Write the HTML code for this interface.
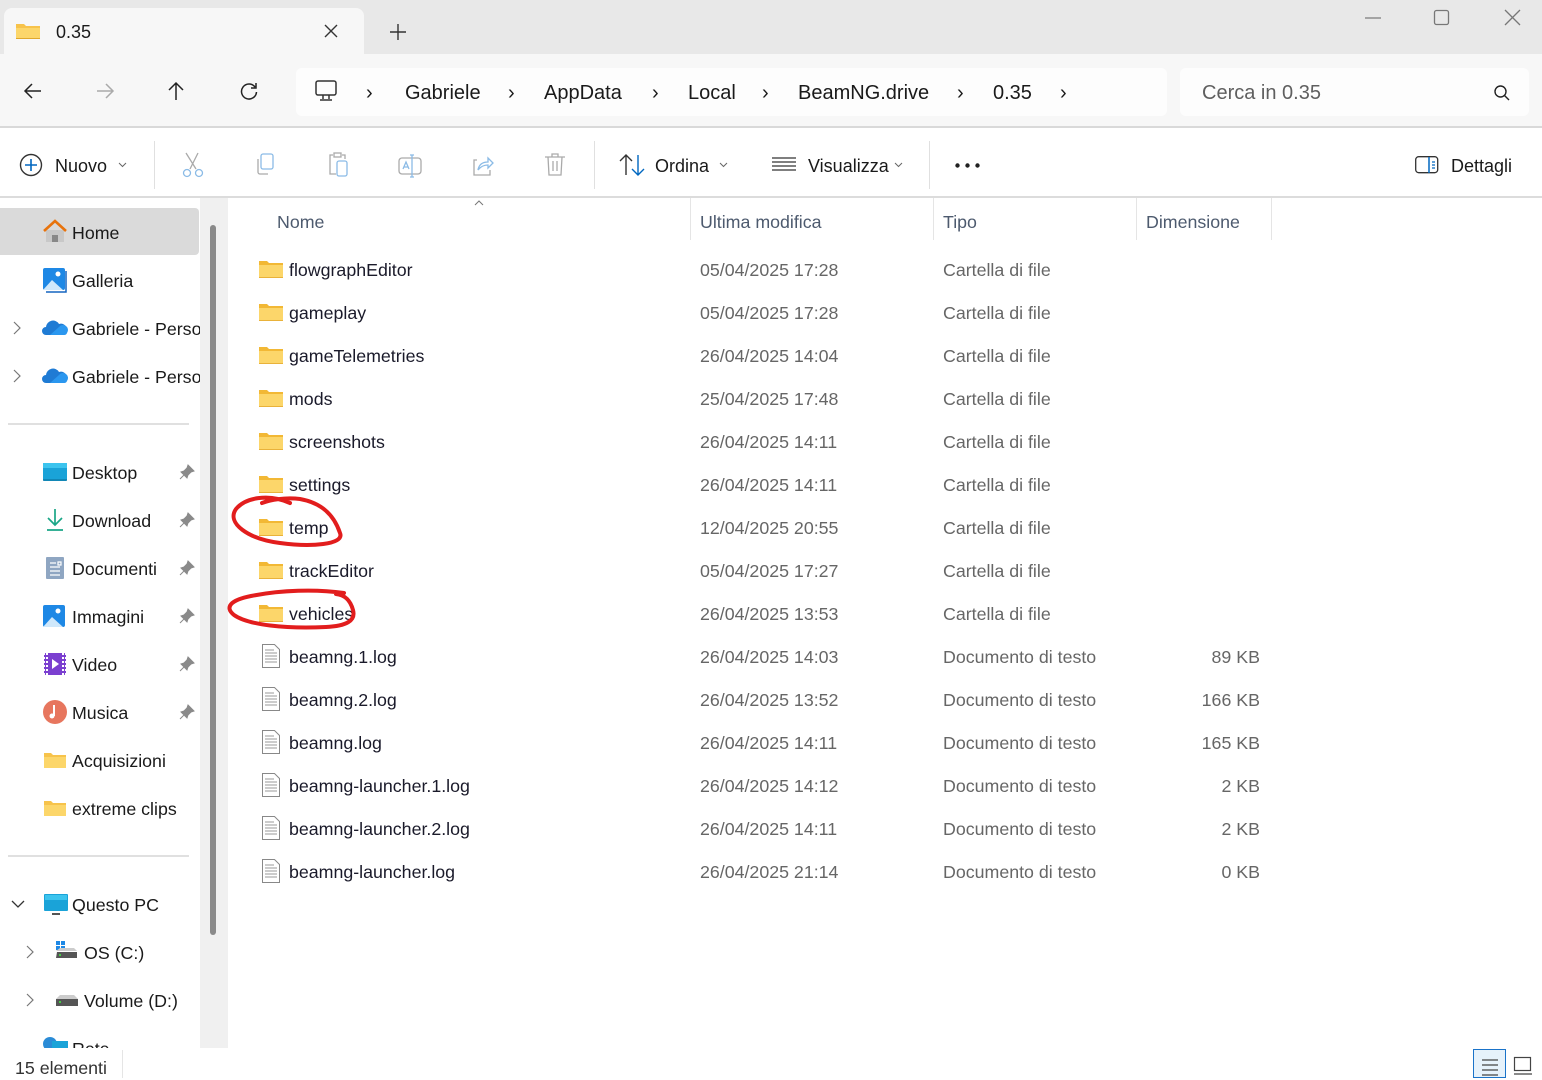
<!DOCTYPE html>
<html><head><meta charset="utf-8"><style>
*{margin:0;padding:0;box-sizing:border-box}
body{width:1542px;height:1078px;position:relative;overflow:hidden;background:#fff;font-family:"Liberation Sans",sans-serif;color:#1a1a1a;font-size:18px}
.a{position:absolute;white-space:nowrap}
.t{line-height:24px}
svg{position:absolute;overflow:visible}
.g{color:#666}
.h{color:#4d5a6e}
.r{font-size:17.8px}
</style></head><body>
<!-- title bar -->
<div class="a" style="left:0;top:0;width:1542px;height:54px;background:#e8e8e8"></div>
<div class="a" style="left:4px;top:8px;width:360px;height:48px;background:#f7f7f7;border-radius:8px 8px 0 0"></div>
<svg style="left:16px;top:22px" width="24" height="18"><path d="M0 2h8l2 2h14v13H0z" fill="#f7c34b"/><path d="M0 6h24v11H0z" fill="#fcd66a"/><path d="M0 16h24v1H0z" fill="#e0a82c"/></svg>
<div class="a t" style="left:56px;top:20px;font-size:18px">0.35</div>
<svg style="left:325px;top:25px" width="12" height="12"><path d="M0 0L12 12M12 0L0 12" stroke="#333" stroke-width="1.4"/></svg>
<svg style="left:390px;top:24px" width="16" height="16"><path d="M8 0V16M0 8H16" stroke="#333" stroke-width="1.4"/></svg>
<svg style="left:1365px;top:17px" width="16" height="2"><path d="M0 1H16" stroke="#777" stroke-width="1.2"/></svg>
<svg style="left:1434px;top:10px" width="16" height="16"><rect x=".5" y=".5" width="14" height="14" rx="2" fill="none" stroke="#777" stroke-width="1.3"/></svg>
<svg style="left:1505px;top:10px" width="16" height="16"><path d="M0 0L15 15M15 0L0 15" stroke="#777" stroke-width="1.3"/></svg>
<!-- address row -->
<div class="a" style="left:0;top:54px;width:1542px;height:74px;background:#f7f7f7;border-bottom:2px solid #d9d9d9"></div>
<svg style="left:24px;top:83px" width="18" height="16"><path d="M17 8H1M8 1L1 8L8 15" fill="none" stroke="#222" stroke-width="1.5"/></svg>
<svg style="left:96px;top:83px" width="18" height="16"><path d="M1 8H17M10 1L17 8L10 15" fill="none" stroke="#aaa" stroke-width="1.5"/></svg>
<svg style="left:168px;top:82px" width="16" height="18"><path d="M8 18V1M1 8L8 1L15 8" fill="none" stroke="#222" stroke-width="1.5"/></svg>
<svg style="left:240px;top:82px" width="18" height="18"><path d="M15 5A7.5 7.5 0 1 0 16.5 10M16 1V6H11" fill="none" stroke="#222" stroke-width="1.5"/></svg>
<div class="a" style="left:296px;top:68px;width:871px;height:48px;background:#fdfdfd;border-radius:6px"></div>
<svg style="left:315px;top:80px" width="22" height="22"><rect x="1" y="1" width="20" height="14" rx="2" fill="none" stroke="#333" stroke-width="1.5"/><path d="M8 15V19M14 15V19M5 20H17" stroke="#333" stroke-width="1.5"/></svg>
<div class="a t" style="left:366px;top:81px;font-size:20px">›</div>
<div class="a t" style="left:405px;top:81px;font-size:20px">Gabriele</div>
<div class="a t" style="left:508px;top:81px;font-size:20px">›</div>
<div class="a t" style="left:544px;top:81px;font-size:20px">AppData</div>
<div class="a t" style="left:652px;top:81px;font-size:20px">›</div>
<div class="a t" style="left:688px;top:81px;font-size:20px">Local</div>
<div class="a t" style="left:762px;top:81px;font-size:20px">›</div>
<div class="a t" style="left:798px;top:81px;font-size:20px">BeamNG.drive</div>
<div class="a t" style="left:957px;top:81px;font-size:20px">›</div>
<div class="a t" style="left:993px;top:81px;font-size:20px">0.35</div>
<div class="a t" style="left:1060px;top:81px;font-size:20px">›</div>
<div class="a" style="left:1180px;top:68px;width:349px;height:48px;background:#fdfdfd;border-radius:6px"></div>
<div class="a t g" style="left:1202px;top:81px;font-size:20px;color:#5f5f5f">Cerca in 0.35</div>
<svg style="left:1494px;top:85px" width="16" height="16"><circle cx="6.5" cy="6.5" r="5.5" fill="none" stroke="#222" stroke-width="1.4"/><path d="M10.5 10.5L15 15" stroke="#222" stroke-width="1.4"/></svg>
<!-- toolbar -->
<div class="a" style="left:0;top:196px;width:1542px;height:2px;background:#dcdcdc"></div>
<svg style="left:19px;top:153px" width="24" height="24"><circle cx="12" cy="12" r="10.5" fill="none" stroke="#333" stroke-width="1.4"/><path d="M12 6V18M6 12H18" stroke="#0067c0" stroke-width="1.6"/></svg>
<div class="a t" style="left:55px;top:154px">Nuovo</div>
<svg style="left:118px;top:162px" width="9" height="6"><path d="M1 1L4.5 4.5L8 1" fill="none" stroke="#666"/></svg>
<div class="a" style="left:154px;top:141px;width:1px;height:48px;background:#e0e0e0"></div>
<div class="a" style="left:594px;top:141px;width:1px;height:48px;background:#e0e0e0"></div>
<div class="a" style="left:929px;top:141px;width:1px;height:48px;background:#e0e0e0"></div>
<svg style="left:182px;top:153px" width="24" height="24"><path d="M4 0L14 16M16 0L8 16" stroke="#aaa" stroke-width="1.3"/><circle cx="5" cy="20" r="3.5" fill="none" stroke="#8bbbe6" stroke-width="1.3"/><circle cx="17" cy="20" r="3.5" fill="none" stroke="#8bbbe6" stroke-width="1.3"/></svg>
<svg style="left:255px;top:154px" width="24" height="24"><rect x="6" y="0" width="12" height="15" rx="2" fill="none" stroke="#8bbbe6" stroke-width="1.3"/><path d="M3 5V18A2 2 0 0 0 5 20H13" fill="none" stroke="#aaa" stroke-width="1.3"/></svg>
<svg style="left:327px;top:152px" width="24" height="26"><path d="M6 3H3V22H9M15 3H18V7" fill="none" stroke="#aaa" stroke-width="1.3"/><rect x="7" y="1" width="7" height="4" fill="none" stroke="#aaa" stroke-width="1.3"/><rect x="10" y="9" width="10" height="15" rx="2" fill="none" stroke="#8bbbe6" stroke-width="1.3"/></svg>
<svg style="left:398px;top:154px" width="26" height="24"><rect x="1" y="4" width="22" height="16" rx="3" fill="none" stroke="#aaa" stroke-width="1.3"/><path d="M5 15L8 8L11 15M6 13H10M14 1V23M12 1H16M12 23H16" fill="none" stroke="#8bbbe6" stroke-width="1.3"/></svg>
<svg style="left:471px;top:154px" width="24" height="24"><path d="M6 6H3V21H19V16" fill="none" stroke="#aaa" stroke-width="1.3"/><path d="M7 16C8 10 12 8 17 8V4L22 9L17 14V11C13 11 10 12 7 16Z" fill="none" stroke="#8bbbe6" stroke-width="1.3"/></svg>
<svg style="left:544px;top:153px" width="22" height="24"><path d="M1 4H21M8 4V1H14V4M4 4L5 22H17L18 4M9 8V18M13 8V18" fill="none" stroke="#aaa" stroke-width="1.3"/></svg>
<svg style="left:619px;top:154px" width="26" height="22"><path d="M7 21V1M1 7L7 1L13 7" fill="none" stroke="#333" stroke-width="1.4"/><path d="M19 1V21M13 15L19 21L25 15" fill="none" stroke="#0067c0" stroke-width="1.4"/></svg>
<div class="a t" style="left:655px;top:154px">Ordina</div>
<svg style="left:719px;top:162px" width="9" height="6"><path d="M1 1L4.5 4.5L8 1" fill="none" stroke="#666"/></svg>
<svg style="left:772px;top:157px" width="24" height="16"><path d="M0 1H24M0 5H24M0 9H24M0 13H24" stroke="#333" stroke-width="1.3"/></svg>
<div class="a t" style="left:808px;top:154px">Visualizza</div>
<svg style="left:894px;top:162px" width="9" height="6"><path d="M1 1L4.5 4.5L8 1" fill="none" stroke="#666"/></svg>
<svg style="left:955px;top:163px" width="26" height="5"><circle cx="2.5" cy="2.5" r="2.2" fill="#222"/><circle cx="12.5" cy="2.5" r="2.2" fill="#222"/><circle cx="22.5" cy="2.5" r="2.2" fill="#222"/></svg>
<svg style="left:1415px;top:156px" width="24" height="18"><rect x=".7" y=".7" width="22" height="16" rx="3" fill="none" stroke="#333" stroke-width="1.3"/><path d="M14 1V17" stroke="#0067c0" stroke-width="1.5"/><path d="M17 6H20M17 9H20M17 12H20" stroke="#0067c0" stroke-width="1.2"/></svg>
<div class="a t" style="left:1451px;top:154px">Dettagli</div>
<!-- sidebar -->
<div class="a" style="left:200px;top:198px;width:28px;height:850px;background:#f0f0f0"></div>
<div class="a" style="left:210px;top:225px;width:6px;height:710px;background:#8a8a8a;border-radius:3px"></div>
<div class="a" style="left:0;top:208px;width:199px;height:47px;background:#dadada;border-radius:0 4px 4px 0"></div>
<svg style="left:43px;top:220px" width="24" height="22"><path d="M3 10V22H21V10" fill="#c8c8c8"/><path d="M9 22V15H15V22" fill="#888"/><path d="M1 11L12 1L23 11" fill="none" stroke="#e8730c" stroke-width="2.6"/></svg>
<div class="a t r" style="left:72px;top:221px">Home</div>
<svg style="left:43px;top:268px" width="24" height="24"><rect x="0" y="0" width="22" height="22" rx="2" fill="#1e88e5"/><path d="M0 22L9 12L20 22Z" fill="#cfe8fb"/><circle cx="15" cy="6" r="2.5" fill="#fff"/><path d="M23 3V24H3" fill="none" stroke="#1565c0" stroke-width="1.5"/></svg>
<div class="a t r" style="left:72px;top:269px">Galleria</div>
<svg style="left:13px;top:321px" width="8" height="14"><path d="M1 1L7 7L1 13" fill="none" stroke="#777" stroke-width="1.2"/></svg>
<svg style="left:42px;top:319px" width="26" height="16"><path d="M4 16A4 4 0 0 1 4 8A7 7 0 0 1 17 5A5.5 5.5 0 0 1 21 16Z" fill="#1f7bd4"/><path d="M8 16L17 8A4.5 4.5 0 0 1 25 14A3 3 0 0 1 22 16Z" fill="#2b97ef"/></svg>
<div class="a t r" style="left:72px;top:317px;width:128px;overflow:hidden">Gabriele - Personale</div>
<svg style="left:13px;top:369px" width="8" height="14"><path d="M1 1L7 7L1 13" fill="none" stroke="#777" stroke-width="1.2"/></svg>
<svg style="left:42px;top:367px" width="26" height="16"><path d="M4 16A4 4 0 0 1 4 8A7 7 0 0 1 17 5A5.5 5.5 0 0 1 21 16Z" fill="#1f7bd4"/><path d="M8 16L17 8A4.5 4.5 0 0 1 25 14A3 3 0 0 1 22 16Z" fill="#2b97ef"/></svg>
<div class="a t r" style="left:72px;top:365px;width:128px;overflow:hidden">Gabriele - Personale</div>
<div class="a" style="left:8px;top:423px;width:181px;height:2px;background:#e0e0e0"></div>
<div class="a" style="left:8px;top:855px;width:181px;height:2px;background:#e0e0e0"></div>
<!-- pinned -->
<svg style="left:43px;top:463px" width="24" height="18"><rect width="24" height="18" rx="1" fill="#1aa3d8"/><rect y="0" width="24" height="5" fill="#3cc4ee"/><path d="M0 17H24" stroke="#0b6b94"/></svg>
<div class="a t r" style="left:72px;top:461px">Desktop</div>
<svg style="left:45px;top:509px" width="20" height="22"><path d="M10 0V15M3 9L10 16L17 9M2 21H18" fill="none" stroke="#1aa687" stroke-width="1.7"/></svg>
<div class="a t r" style="left:72px;top:509px">Download</div>
<svg style="left:46px;top:557px" width="18" height="22"><rect width="18" height="22" rx="1" fill="#8fa6c2"/><path d="M4 6H10M4 10H14M4 14H14M4 18H14M12 5H15V8H12Z" stroke="#fff" stroke-width="1.2" fill="none"/></svg>
<div class="a t r" style="left:72px;top:557px">Documenti</div>
<svg style="left:43px;top:605px" width="24" height="24"><rect x="0" y="0" width="22" height="22" rx="2" fill="#1e88e5"/><path d="M0 22L9 12L20 22Z" fill="#cfe8fb"/><circle cx="15" cy="6" r="2.5" fill="#fff"/></svg>
<div class="a t r" style="left:72px;top:605px">Immagini</div>
<svg style="left:44px;top:653px" width="22" height="22"><rect width="22" height="22" rx="2" fill="#7b3fd0"/><path d="M0 0V22M3 0V22M19 0V22M22 0V22" stroke="#fff" stroke-dasharray="2 2" stroke-width="2"/><path d="M8 6L15 11L8 16Z" fill="#fff"/></svg>
<div class="a t r" style="left:72px;top:653px">Video</div>
<svg style="left:43px;top:700px" width="24" height="24"><circle cx="12" cy="12" r="12" fill="#e7765e"/><path d="M11 5V16" stroke="#fff" stroke-width="2"/><circle cx="9" cy="16" r="2.5" fill="#fff"/></svg>
<div class="a t r" style="left:72px;top:701px">Musica</div>
<svg style="left:44px;top:751px" width="22" height="17"><path d="M0 2h7l2 2h13v13H0z" fill="#f7c34b"/><path d="M0 6h22v11H0z" fill="#fcd66a"/></svg>
<div class="a t r" style="left:72px;top:749px">Acquisizioni</div>
<svg style="left:44px;top:799px" width="22" height="17"><path d="M0 2h7l2 2h13v13H0z" fill="#f7c34b"/><path d="M0 6h22v11H0z" fill="#fcd66a"/></svg>
<div class="a t r" style="left:72px;top:797px">extreme clips</div>
<svg style="left:179px;top:464px" width="16" height="16"><path d="M9 1L15 7L12 8L9 11L8 14L2 8L5 7L8 4Z M5 11L1 15" fill="#8a8a8a" stroke="#8a8a8a"/></svg>
<svg style="left:179px;top:512px" width="16" height="16"><path d="M9 1L15 7L12 8L9 11L8 14L2 8L5 7L8 4Z M5 11L1 15" fill="#8a8a8a" stroke="#8a8a8a"/></svg>
<svg style="left:179px;top:560px" width="16" height="16"><path d="M9 1L15 7L12 8L9 11L8 14L2 8L5 7L8 4Z M5 11L1 15" fill="#8a8a8a" stroke="#8a8a8a"/></svg>
<svg style="left:179px;top:608px" width="16" height="16"><path d="M9 1L15 7L12 8L9 11L8 14L2 8L5 7L8 4Z M5 11L1 15" fill="#8a8a8a" stroke="#8a8a8a"/></svg>
<svg style="left:179px;top:656px" width="16" height="16"><path d="M9 1L15 7L12 8L9 11L8 14L2 8L5 7L8 4Z M5 11L1 15" fill="#8a8a8a" stroke="#8a8a8a"/></svg>
<svg style="left:179px;top:704px" width="16" height="16"><path d="M9 1L15 7L12 8L9 11L8 14L2 8L5 7L8 4Z M5 11L1 15" fill="#8a8a8a" stroke="#8a8a8a"/></svg>
<!-- this pc -->
<svg style="left:11px;top:900px" width="14" height="8"><path d="M1 1L7 7L13 1" fill="none" stroke="#333" stroke-width="1.3"/></svg>
<svg style="left:44px;top:894px" width="24" height="22"><rect width="24" height="17" rx="1" fill="#1aa3d8"/><rect x="1" y="1" width="22" height="5" fill="#3cc4ee"/><path d="M8 20H16" stroke="#555" stroke-width="2"/></svg>
<div class="a t r" style="left:72px;top:893px">Questo PC</div>
<svg style="left:26px;top:945px" width="8" height="14"><path d="M1 1L7 7L1 13" fill="none" stroke="#777" stroke-width="1.2"/></svg>
<svg style="left:56px;top:941px" width="22" height="18"><rect x="0" y="0" width="4" height="4" fill="#1e88e5"/><rect x="5" y="0" width="4" height="4" fill="#1e88e5"/><rect x="0" y="5" width="4" height="4" fill="#1e88e5"/><rect x="5" y="5" width="4" height="4" fill="#1e88e5"/><path d="M1 11H21V17H0Z" fill="#555"/><path d="M0 10L4 7H18L21 10Z" fill="#ccc"/><rect x="3" y="13" width="2" height="2" fill="#4c4"/></svg>
<div class="a t r" style="left:84px;top:941px">OS (C:)</div>
<svg style="left:26px;top:993px" width="8" height="14"><path d="M1 1L7 7L1 13" fill="none" stroke="#777" stroke-width="1.2"/></svg>
<svg style="left:56px;top:993px" width="22" height="14"><path d="M0 6H22V13H0Z" fill="#555"/><path d="M0 6L4 2H18L22 6Z" fill="#ccc"/><rect x="3" y="8" width="2" height="2" fill="#4c4"/></svg>
<div class="a t r" style="left:84px;top:989px">Volume (D:)</div>
<div class="a" style="left:0;top:1036px;width:200px;height:12px;overflow:hidden">
<svg style="left:42px;top:0" width="26" height="20"><circle cx="8" cy="8" r="7" fill="#2a8bd6"/><rect x="10" y="5" width="16" height="12" fill="#1aa3d8"/></svg>
<div class="a t r" style="left:72px;top:1px">Rete</div></div>
<!-- content header -->
<div class="a t h r" style="left:277px;top:210px">Nome</div>
<svg style="left:474px;top:200px" width="10" height="6"><path d="M1 5L5 1L9 5" fill="none" stroke="#777"/></svg>
<div class="a" style="left:690px;top:198px;width:1px;height:42px;background:#e5e5e5"></div>
<div class="a" style="left:933px;top:198px;width:1px;height:42px;background:#e5e5e5"></div>
<div class="a" style="left:1136px;top:198px;width:1px;height:42px;background:#e5e5e5"></div>
<div class="a" style="left:1271px;top:198px;width:1px;height:42px;background:#e5e5e5"></div>
<div class="a t h r" style="left:700px;top:210px">Ultima modifica</div>
<div class="a t h r" style="left:943px;top:210px">Tipo</div>
<div class="a t h r" style="left:1146px;top:210px">Dimensione</div>
<div id="rows"></div>
<script>
var d=[["flowgraphEditor","05/04/2025 17:28",0],["gameplay","05/04/2025 17:28",0],["gameTelemetries","26/04/2025 14:04",0],["mods","25/04/2025 17:48",0],["screenshots","26/04/2025 14:11",0],["settings","26/04/2025 14:11",0],["temp","12/04/2025 20:55",0],["trackEditor","05/04/2025 17:27",0],["vehicles","26/04/2025 13:53",0],["beamng.1.log","26/04/2025 14:03","89 KB"],["beamng.2.log","26/04/2025 13:52","166 KB"],["beamng.log","26/04/2025 14:11","165 KB"],["beamng-launcher.1.log","26/04/2025 14:12","2 KB"],["beamng-launcher.2.log","26/04/2025 14:11","2 KB"],["beamng-launcher.log","26/04/2025 21:14","0 KB"]];
var h="";
d.forEach(function(r,i){var y=258+i*43;
if(!r[2]) h+='<svg style="left:259px;top:'+(y+2)+'px" width="24" height="18"><path d="M0 1h8l2 2h14v15H0z" fill="#f2b835"/><path d="M0 5h24v13H0z" fill="#fcd66a"/><path d="M0 17h24v1H0z" fill="#e9b23a"/></svg>';
else h+='<svg style="left:262px;top:'+(y-1)+'px" width="18" height="24"><path d="M.5 .5H12.5L17.5 5.5V23.5H.5Z" fill="#fff" stroke="#888"/><path d="M3 6H12M3 9H15M3 12H15M3 15H15M3 18H15" stroke="#999"/></svg>';
h+='<div class="a t r" style="left:289px;top:'+y+'px;color:#1a1a2a">'+r[0]+'</div>';
h+='<div class="a t g r" style="left:700px;top:'+y+'px">'+r[1]+'</div>';
h+='<div class="a t g r" style="left:943px;top:'+y+'px">'+(r[2]?"Documento di testo":"Cartella di file")+'</div>';
if(r[2]) h+='<div class="a t g r" style="left:1160px;width:100px;text-align:right;top:'+y+'px">'+r[2]+'</div>';});
document.getElementById("rows").outerHTML=h;
</script>
<!-- red circles -->
<svg style="left:0;top:0" width="1" height="1"><path d="M290 503C268 493 245 498 236 509C226 523 248 539 280 543C310 547 345 545 340 533C334 515 322 503 300 499C285 497 270 500 262 503" fill="none" stroke="#e21d1d" stroke-width="4" stroke-linecap="round"/></svg>
<svg style="left:226px;top:585px" width="135" height="50"><path d="M118 8C90 4 55 5 25 11C5 15 -2 22 8 30C22 40 60 44 100 42C120 41 130 36 127 25C124 14 118 10 110 9" fill="none" stroke="#e21d1d" stroke-width="4" stroke-linecap="round"/></svg>
<!-- status bar -->
<div class="a" style="left:0;top:1048px;width:1542px;height:30px;background:#fff"></div>
<div class="a t r" style="left:15px;top:1056px;color:#333">15 elementi</div>
<div class="a" style="left:122px;top:1050px;width:1px;height:28px;background:#e5e5e5"></div>
<div class="a" style="left:1473px;top:1049px;width:33px;height:29px;background:#e6f2fb;border:1px solid #1a73c9"></div>
<svg style="left:1482px;top:1059px" width="16" height="16"><path d="M0 1H16M0 6H16M0 11H16M0 16H16" stroke="#444" stroke-width="1.2"/></svg>
<svg style="left:1514px;top:1057px" width="18" height="18"><rect x=".5" y=".5" width="16" height="13" fill="none" stroke="#444" stroke-width="1.2"/><path d="M0 17H18" stroke="#444" stroke-width="1.2"/></svg>
</body></html>
